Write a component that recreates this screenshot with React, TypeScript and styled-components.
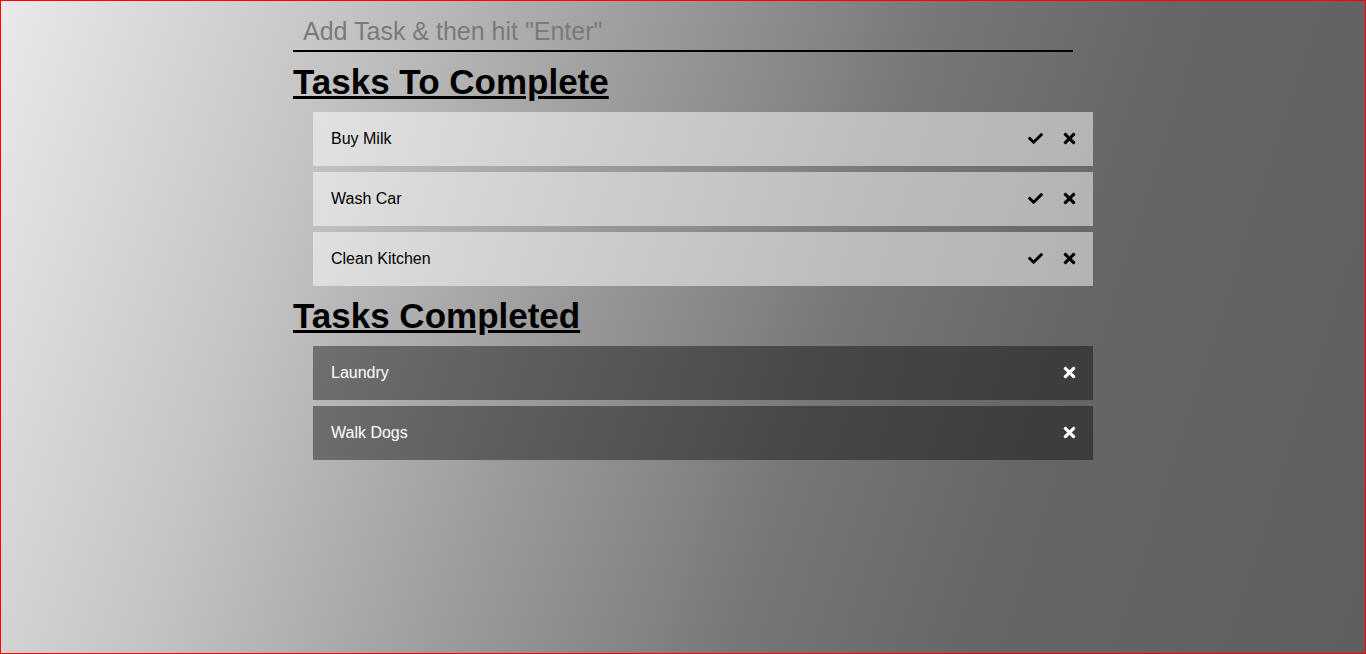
import React from "react";
import styled, { createGlobalStyle } from "styled-components";
import { FaCheck, FaTimes } from "react-icons/fa";

const GlobalStyle = createGlobalStyle`
  html, body {
    margin: 0;
    padding: 0;
    height: 100%;
  }
  body {
    font-family: "Liberation Sans", Arial, sans-serif;
  }
  #root {
    min-height: 100%;
  }
`;

const Page = styled.div`
  box-sizing: border-box;
  min-height: 100vh;
  border: 1px solid #ff0000;
  background: linear-gradient(108deg, #e9e9e9 0%, #c4c4c4 22%, #9a9a9a 42%, #777777 60%, #666666 75%, #5f5f5f 100%);
`;

const Container = styled.div`
  width: 780px;
  margin: 0 auto;
`;

const TaskInput = styled.input`
  display: block;
  box-sizing: border-box;
  width: 100%;
  height: 51px;
  padding: 16px 10px 5px;
  border: none;
  border-bottom: 2px solid #000;
  background: transparent;
  font-family: "Liberation Sans", Arial, sans-serif;
  font-size: 25px;
  line-height: 28px;
  color: #222;
  outline: none;

  &::placeholder {
    color: #7a7a7a;
  }
`;

const Heading = styled.h2`
  margin: 10px 0 10px;
  font-size: 35px;
  line-height: 40px;
  font-weight: bold;
  text-decoration: underline;
  color: #000;
`;

const List = styled.ul`
  list-style: none;
  margin: 0;
  padding: 0 0 0 20px;
`;

const Item = styled.li<{ $done?: boolean }>`
  box-sizing: border-box;
  width: 780px;
  height: 54px;
  margin-bottom: 6px;
  padding: 0 15px 0 18px;
  display: flex;
  align-items: center;
  justify-content: space-between;
  font-size: 16px;
  color: ${(p) => (p.$done ? "#ffffff" : "#000000")};
  background: ${(p) => (p.$done ? "rgba(0, 0, 0, 0.4)" : "rgba(255, 255, 255, 0.5)")};
`;

const Actions = styled.div`
  display: flex;
  align-items: center;
  gap: 18px;
  margin-top: -2px;
`;

const IconButton = styled.button<{ $light?: boolean }>`
  display: flex;
  align-items: center;
  border: none;
  background: none;
  padding: 0;
  cursor: pointer;
  color: ${(p) => (p.$light ? "#ffffff" : "#000000")};
`;

const todo = ["Buy Milk", "Wash Car", "Clean Kitchen"];
const done = ["Laundry", "Walk Dogs"];

export default function App() {
  return (
    <>
      <GlobalStyle />
      <Page>
        <Container>
          <TaskInput placeholder={'Add Task & then hit "Enter"'} />
          <Heading>Tasks To Complete</Heading>
          <List>
            {todo.map((t) => (
              <Item key={t}>
                <span>{t}</span>
                <Actions>
                  <IconButton aria-label="complete">
                    <FaCheck size={15} />
                  </IconButton>
                  <IconButton aria-label="remove">
                    <FaTimes size={17} />
                  </IconButton>
                </Actions>
              </Item>
            ))}
          </List>
          <Heading>Tasks Completed</Heading>
          <List>
            {done.map((t) => (
              <Item key={t} $done>
                <span>{t}</span>
                <Actions>
                  <IconButton $light aria-label="remove">
                    <FaTimes size={17} />
                  </IconButton>
                </Actions>
              </Item>
            ))}
          </List>
        </Container>
      </Page>
    </>
  );
}
